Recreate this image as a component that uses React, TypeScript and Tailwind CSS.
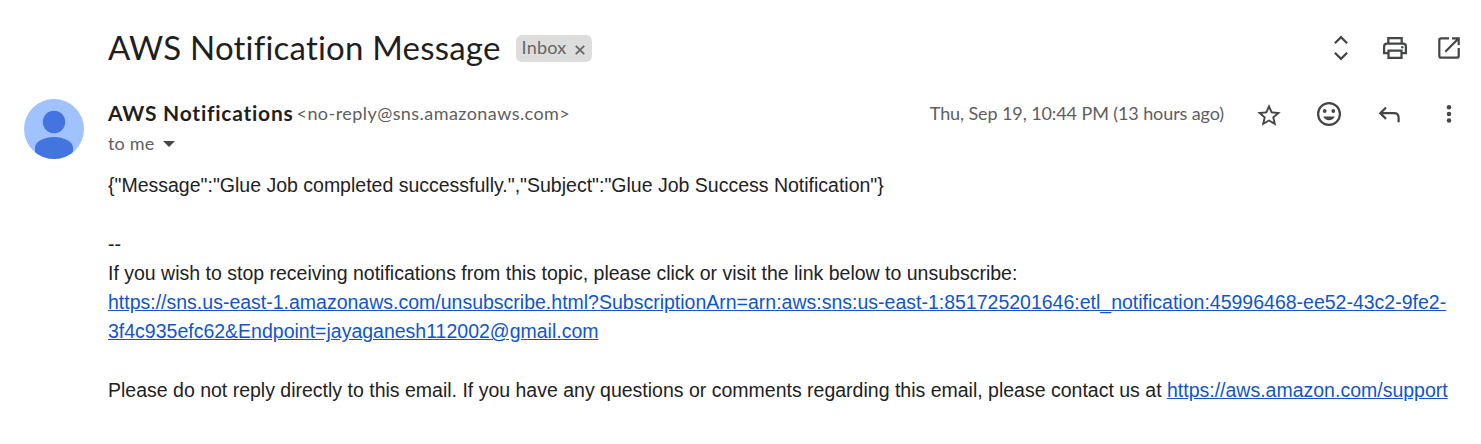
import type { ReactNode } from "react";

function Icon({ children, label }: { children: ReactNode; label: string }) {
  return (
    <button aria-label={label} className="flex size-[30px] shrink-0 items-center justify-center text-[#444746]">
      <svg width="30" height="30" viewBox="0 0 30 30" fill="none" stroke="currentColor" strokeWidth="2.250">
        {children}
      </svg>
    </button>
  );
}

function Avatar() {
  return (
    <svg className="size-[60px] shrink-0" viewBox="0 0 60 60">
      <defs>
        <clipPath id="avatar-clip">
          <circle cx="30" cy="30" r="30" />
        </clipPath>
      </defs>
      <g clipPath="url(#avatar-clip)">
        <rect width="60" height="60" fill="#a0c2ff" />
        <circle cx="30" cy="23" r="11.2" fill="#4374e0" />
        <path d="M11 60V49C11 42 20.500 38 30 38S49 42 49 49V60Z" fill="#4374e0" />
      </g>
    </svg>
  );
}

const link = "text-[#1155cc] underline";

export default function App() {
  return (
    <main className="h-[444px] w-[1481px] overflow-hidden bg-white pl-6 pr-[17px] pt-[26px] font-['Lato',sans-serif] text-[#1f1f1f]">
      <header className="flex h-11 items-center pl-[84px]">
        <h1 className="whitespace-nowrap pb-0.5 text-[33px] leading-[42px] tracking-[0.2px]">AWS Notification Message</h1>
        <span className="ml-[15px] flex h-[27px] w-[76px] shrink-0 items-center justify-between rounded-[6px] bg-[#ddd] pl-1.5 pr-[7px] text-[18px] text-[#666]">
          <span className="pb-0.5 leading-[25px] tracking-[0.2px]">Inbox</span>
          <svg width="10" height="10" viewBox="0 0 10 10" className="mt-[3px]" stroke="#666" strokeWidth="1.700">
            <path d="M.8.8 9.200 9.200M9.200.8.8 9.200" />
          </svg>
        </span>
        <div className="ml-auto flex gap-6">
          <Icon label="Collapse all">
            <path d="m8.900 10.200 6.100-6 6.100 6M8.900 19.800l6.100 6 6.100-6" />
          </Icon>
          <Icon label="Print all">
            <path d="M8.300 10V5.100h13.400V10M8 20.200H4.100v-6.500q0-3 3-3h15.800q3 0 3 3v6.500H22M8.500 17.500h13v7.400h-13Z" />
            <circle cx="22.200" cy="14.200" r="1.200" fill="currentColor" stroke="none" />
          </Icon>
          <Icon label="In new window">
            <path d="M15 5.300H7Q5.300 5.300 5.300 7v16q0 1.700 1.700 1.700h16q1.700 0 1.700-1.700v-8M18 5.300h6.700V12M24.500 5.500 11.300 18.700" />
          </Icon>
        </div>
      </header>

      <section className="mt-[29px] flex">
        <Avatar />
        <div className="ml-6 min-w-0 flex-1">
          <div className="flex h-[30px] items-center whitespace-nowrap">
            <strong className="pb-0.5 text-[21px] font-bold tracking-[0.75px]">AWS Notifications</strong>
            <span className="ml-[3px] pb-0.5 text-[18px] tracking-[0.44px] text-[#5e5e5e]">&lt;no-reply@sns.amazonaws.com&gt;</span>
            <span className="ml-auto pb-0.5 text-[18px] tracking-[-0.1px] text-[#5e5e5e]">Thu, Sep 19, 10:44 PM (13 hours ago)</span>
            <div className="ml-[30px] flex gap-[30px]">
              <Icon label="Star">
                <path
                  transform="translate(.96 2.700) scale(1.170 1.150)"
                  fill="currentColor"
                  stroke="none"
                  d="M22 9.240l-7.190-.620L12 2 9.190 8.630 2 9.240l5.460 4.730L5.820 21 12 17.270 18.180 21l-1.630-7.030L22 9.240zM12 15.400l-3.760 2.270 1-4.280-3.320-2.880 4.380-.380L12 6.100l1.710 4.040 4.380.380-3.320 2.880 1 4.280L12 15.400z"
                />
              </Icon>
              <Icon label="Add reaction">
                <circle cx="15" cy="15" r="10.900" />
                <g fill="currentColor" stroke="none">
                  <circle cx="10.700" cy="12" r="1.900" />
                  <circle cx="19.300" cy="12" r="1.900" />
                  <path d="M9.300 17.500h11.400Q19 21.300 15 21.300T9.300 17.500Z" />
                </g>
              </Icon>
              <Icon label="Reply">
                <path d="m12 8.500-5.700 5.700 5.700 5.700M6.300 14.200H20q4.600 0 4.600 4.500V23.300" />
              </Icon>
              <Icon label="More">
                <g fill="currentColor" stroke="none">
                  <circle cx="15" cy="8.300" r="2.250" />
                  <circle cx="15" cy="15" r="2.250" />
                  <circle cx="15" cy="21.600" r="2.250" />
                </g>
              </Icon>
            </div>
          </div>
          <div className="flex h-[30px] items-center gap-2 text-[18px] text-[#5e5e5e]">
            <span className="pb-0.5 tracking-[0.2px]">to me</span>
            <svg width="12" height="6" viewBox="0 0 12 6" fill="#444746">
              <path d="M0 0h12L6 6Z" />
            </svg>
          </div>
        </div>
      </section>

      <article className="ml-[84px] mt-3 w-[1345px] font-['Liberation_Sans',sans-serif] text-[19.5px] leading-[29.25px] text-[#222]">
        <p>{'{"Message":"Glue Job completed successfully.","Subject":"Glue Job Success Notification"}'}</p>
        <p className="mt-[30px]">--</p>
        <p className="-mt-[0.75px] whitespace-nowrap">If you wish to stop receiving notifications from this topic, please click or visit the link below to unsubscribe:</p>
        <p className="whitespace-nowrap">
          <a className={link}>
            https://sns.us-east-1.amazonaws.com/unsubscribe.html?SubscriptionArn=arn:aws:sns:us-east-1:851725201646:etl_notification:45996468-ee52-43c2-9fe2-
            <br />
            3f4c935efc62&amp;Endpoint=jayaganesh112002@gmail.com
          </a>
        </p>
        <p className="mt-[29.25px] whitespace-nowrap">
          Please do not reply directly to this email. If you have any questions or comments regarding this email, please contact us at{" "}
          <a className={link}>https://aws.amazon.com/support</a>
        </p>
      </article>
    </main>
  );
}
